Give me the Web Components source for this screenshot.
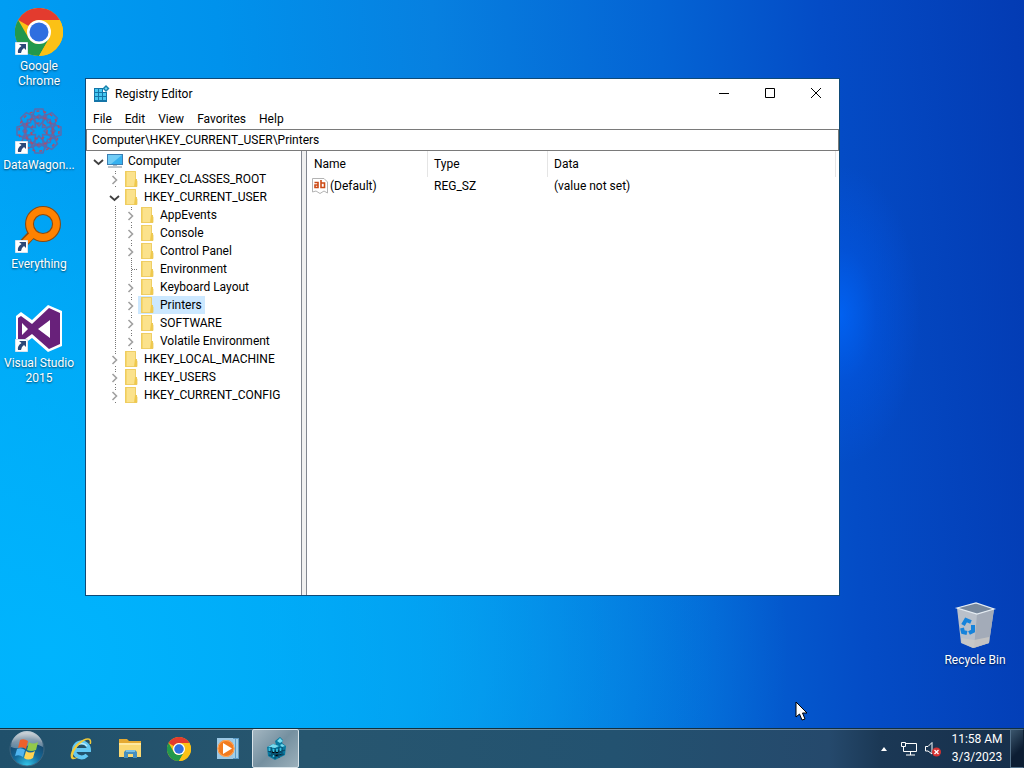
<!DOCTYPE html>
<html lang="en">
<head>
<meta charset="utf-8">
<title>Registry Editor</title>
<style>
  html, body { height: 100%; margin: 0; }
  body { font: 12px/16px Roboto, "Open Sans", sans-serif; color: #000; overflow: hidden; }
</style>
</head>
<body>
<desk-top>
  <desktop-icon slot="icons" icon="chrome" shortcut>Google Chrome</desktop-icon>
  <desktop-icon slot="icons" icon="wagon" shortcut>DataWagon...</desktop-icon>
  <desktop-icon slot="icons" icon="everything" shortcut>Everything</desktop-icon>
  <desktop-icon slot="icons" icon="vs" shortcut>Visual Studio 2015</desktop-icon>
  <desktop-icon slot="corner" icon="bin">Recycle Bin</desktop-icon>

  <app-window slot="window" heading="Registry Editor" icon="regedit">
    <menu-bar slot="menu" items="File,Edit,View,Favorites,Help"></menu-bar>
    <address-bar slot="menu" path="Computer\HKEY_CURRENT_USER\Printers"></address-bar>
    <key-tree slot="tree">
      <tree-row level="0" state="open" icon="computer">Computer</tree-row>
      <tree-row level="1" state="closed">HKEY_CLASSES_ROOT</tree-row>
      <tree-row level="1" state="open">HKEY_CURRENT_USER</tree-row>
      <tree-row level="2" state="closed">AppEvents</tree-row>
      <tree-row level="2" state="closed">Console</tree-row>
      <tree-row level="2" state="closed">Control Panel</tree-row>
      <tree-row level="2" state="leaf">Environment</tree-row>
      <tree-row level="2" state="closed">Keyboard Layout</tree-row>
      <tree-row level="2" state="closed" selected>Printers</tree-row>
      <tree-row level="2" state="closed">SOFTWARE</tree-row>
      <tree-row level="2" state="closed">Volatile Environment</tree-row>
      <tree-row level="1" state="closed">HKEY_LOCAL_MACHINE</tree-row>
      <tree-row level="1" state="closed">HKEY_USERS</tree-row>
      <tree-row level="1" state="closed">HKEY_CURRENT_CONFIG</tree-row>
    </key-tree>
    <value-list slot="list"></value-list>
  </app-window>

  <task-bar slot="taskbar">
    <task-button slot="start" icon="start" size="38" label="Start" wide></task-button>
    <task-button icon="ie" label="Internet Explorer"></task-button>
    <task-button icon="explorer" label="File Explorer"></task-button>
    <task-button icon="chrome" label="Google Chrome"></task-button>
    <task-button icon="player" label="Media Player"></task-button>
    <task-button icon="regcube" label="Registry Editor" active></task-button>
  </task-bar>
</desk-top>

<script>
const ICONS = {
  chrome: ['0 0 48 48', `<circle cx="24" cy="24" r="24" fill="#fbc116"/>
    <path d="M3.2 12A24 24 0 0 1 44.8 12H24A12 12 0 0 0 13.6 18Z" fill="#e33b2e"/>
    <path d="M3.2 12 13.6 30A12 12 0 0 0 24 36L34.4 30 24 48A24 24 0 0 1 3.2 12Z" fill="#22984c"/>
    <path d="M34.4 30 24 48A24 24 0 0 0 44.8 12H24Z" fill="#fbc116"/>
    <circle cx="24" cy="24" r="12" fill="#fff"/><circle cx="24" cy="24" r="9.5" fill="#2f6fe0"/>`],
  wagon: ['0 0 48 48', `<g fill="none" stroke="#5a6cae" stroke-width="1.500">
    ${[0,45,90,135,180,225,270,315].map(r => `<g transform="rotate(${r} 24 24)"><path d="M24 19 17 11 20 2 28 2 31 11Z"/><path d="M17 7 24 12 31 7M15 14 24 8 33 14"/></g>`).join('')}
    </g><g fill="none" stroke="#b04c68" stroke-width="1.500" stroke-dasharray="3 4">
    <circle cx="24" cy="24" r="20"/><circle cx="24" cy="24" r="14"/><circle cx="24" cy="24" r="8"/></g>`],
  everything: ['0 0 48 48', `<path d="M6 40 19 26" stroke="#8a4a10" stroke-width="9"/>
    <circle cx="28" cy="18" r="13.5" fill="none" stroke="#8a4a10" stroke-width="9"/>
    <path d="M6 40 20 26" stroke="#ff8200" stroke-width="6.5"/>
    <circle cx="28" cy="18" r="13.5" fill="none" stroke="#ff8200" stroke-width="6.8"/>`],
  vs: ['0 0 48 48', `<path d="M33 0 47 6V41L33 47 17 33 6 41 1 37V11L6 7 17 15Z" fill="#fff"/>
    <path d="M34 3 45 8V39L34 44 17 29 6 37 3 35V13L6 11 17 19ZM35 15 23 24 35 33ZM7 18V30L13 24Z" fill="#68217a" fill-rule="evenodd"/>`],
  bin: ['0 0 48 48', `<path d="M6 6 25 1 43 7 38 41 22 46 10 41Z" fill="#b9c0ca"/>
    <path d="M6 6 25 1 43 7 26 12Z" fill="#78889c"/><path d="M26 12 43 7 38 41 23 46Z" fill="#a3abb8"/>
    <path d="M10 36 23 38 38 35V41L22 46 11 41Z" fill="#cbc9c5" opacity=".8"/>
    <path d="M6 6 25 1 43 7 26 12Z" fill="none" stroke="#e4ebf2" stroke-width="1.2"/>
    <g fill="none" stroke="#1683db" stroke-width="4"><path d="M12 23 15 18 20 20"/><path d="M22 23 22 29 18 31"/><path d="M11 26 12 30 16 31"/></g>`],
  computer: ['0 0 16 16', `<path d="M0 1H16V12H0Z" fill="#3a7fb4"/><path d="M1 2H15V11H1Z" fill="#36b1ef"/><path d="M1 2H15L4 11H1Z" fill="#72cdf6"/>
    <path d="M1 14H15" stroke="#7d8d99"/><path d="M6 12H10V13H6Z" fill="#a9bac5"/>`],
  folder: ['0 0 16 16', `<path d="M2 0H13V16H2Z" fill="#fbe28c"/><path d="M2 0H4V16H2Z" fill="#f6d76c"/><path d="M12 8H14V16H11Z" fill="#efc94c"/><path d="M2.5 .5H12.500V8L14 10V15.500H2.500Z" fill="none" stroke="#ecc95c" stroke-width=".8"/>`],
  value: ['0 0 16 16', `<path d="M.5 .5H12L15.500 4V15L12 13 8 15.500 4 13 .5 14Z" fill="#fff" stroke="#b3b3b3"/>
    <g fill="none" stroke="#cc4a16" stroke-width="1.600"><path d="M2.500 4.500H6V9.500H3V7H6M9 2V9.500H12.500V5H9"/></g>`],
  regedit: ['0 0 18 18', `<path d="M1 3H10V7H14V17H1Z" fill="#1475a8"/>
    <g fill="#45c7f0">${[[2,4],[6,4],[2,8],[6,8],[10,8],[2,12],[6,12],[10,12]].map(p=>`<path d="M${p[0]} ${p[1]}h3v3h-3z"/>`).join('')}</g>
    <path d="M13 0 16.500 3.500 13 7 9.500 3.500Z" fill="#1681ad"/><path d="M13 2 14.500 3.500 13 5 11.500 3.500Z" fill="#73dcf6"/>`],
  regcube: ['0 0 24 24', `<path d="M3 10 9 7 12 8 11 4 16 0 19 3 18 6 22 9 21 18 11 23 4 19Z" fill="#08799f"/>
    <path d="M4 10 9 7 15 9 11 11ZM13 4 16 1 19 4 16 6ZM16 8 18 7 21 9 18 10Z" fill="#77dcf0"/>
    <g stroke="#0b4e6e" stroke-width="1.200"><path d="M7 10 8 20M11 11V22M15 10V21M18 10V19M4 14 11 17 21 13M5 18 11 20 20 17"/></g>
    <path d="M5.500 11V14M9.500 12V15M9.500 18V20M13 12V15M16.500 11V14" stroke="#36bfe0" stroke-width="1.700"/>`],
  ie: ['0 0 24 24', `<path d="M5.500 13H20A7.500 7.500 0 1 0 18 18" fill="none" stroke="#63c8f3" stroke-width="4"/>
    <path d="M6 11.500A7 7 0 0 1 18 9" fill="none" stroke="#b7ecff" stroke-width="1.500"/>
    <path d="M22 7C24-1 16 0 9 6C2 12 0 20 3 22C5 23 8 21 9 20C4 22 3 20 5 15C8 8 17 1 20 3C21 4 21 5 20.500 7Z" fill="#f2cb39"/>`],
  explorer: ['0 0 24 24', `<path d="M1 2H9L11 4H23V20H1Z" fill="#e5aa32"/><path d="M1 6H23V20H1Z" fill="#fbd972"/><path d="M1 6H23V8H1Z" fill="#ffe9a0"/>
    <path d="M6 21V15L8 13H17L19 15V21H15V17H10V21Z" fill="#478fbe"/><path d="M8 13H17V15H8Z" fill="#79c0e5"/>`],
  player: ['0 0 24 24', `<path d="M4 1H23V22H4Z" fill="#5b9cc8"/><path d="M18 2V21M21 2V21" stroke="#b9dff2" stroke-width="1.500"/><path d="M1 1H17V22H1Z" fill="#9cc8e4"/>
    <circle cx="10" cy="11.500" r="8.500" fill="#f27b1e"/><circle cx="10" cy="11.500" r="8" fill="none" stroke="#ffac61"/><path d="M7 6 16 11.500 7 17Z" fill="#fff"/>`],
  start: ['0 0 38 38', `<defs><radialGradient id="o" cx=".5" cy="1" r="1"><stop offset="0" stop-color="#35cbed"/><stop offset=".4" stop-color="#146b9c"/><stop offset=".8" stop-color="#164265"/><stop offset="1" stop-color="#75828e"/></radialGradient>
    <linearGradient id="g" x2="0" y2="1"><stop offset="0" stop-color="#fff" stop-opacity=".7"/><stop offset="1" stop-color="#fff" stop-opacity=".3"/></linearGradient></defs>
    <circle cx="19" cy="19" r="17" fill="url(#o)" stroke="#3f6680"/><path d="M3 17A16 16 0 0 1 35 17Q27 12 19 16 10 20 3 17Z" fill="url(#g)"/>
    <path d="M12 10Q16 8 20 11L18 19Q14 16 10 18Z" fill="#ee602b"/><path d="M21 12Q25 15 30 12L28 20Q23 22 19 20Z" fill="#92c94a"/>
    <path d="M9 19Q13 17 17 20L15 27Q11 24 7 26Z" fill="#50b4ef"/><path d="M18 21Q22 24 27 21L25 28Q20 31 16 28Z" fill="#ffd452"/>`],
  network: ['0 0 18 16', `<g fill="none" stroke="#fff"><path d="M6 2.500H16.500V10.500H3.500V7M10.500 11V14M6 14H15"/><path d="M1.500 1.500H5.500V5.500H1.500ZM3.500 5.500V9"/></g>`],
  volume: ['0 0 18 16', `<path d="M1.500 5.500H4L8 1.500V13L4 10H1.500Z" fill="none" stroke="#fff"/><circle cx="12.500" cy="11" r="4.500" fill="#d63232"/><path d="M10.500 9 14.500 13M14.500 9 10.500 13" stroke="#fff" stroke-width="1.300"/>`],
  up: ['0 0 8 6', `<path d="M1 5 4 1 7 5Z" fill="#fff"/>`],
  min: ['0 0 12 12', `<path d="M1 5.500H11" stroke="#000"/>`],
  max: ['0 0 12 12', `<path d="M1.500 .5H10.500V9.500H1.500Z" fill="none" stroke="#000"/>`],
  close: ['0 0 12 12', `<path d="M1 0 11 10M11 0 1 10" stroke="#000"/>`],
  shortcut: ['0 0 13 13', `<path d="M.5 .5H12.500V12.500H.5Z" fill="#fff" stroke="#d8e4ef"/><path d="M4 2H11V8L9 6Q6 8 6 11H3Q2 7 6.500 4Z" fill="#2c4878"/>`],
  pointer: ['0 0 14 20', `<path d="M1 1V16L4.500 13 7 19 10 18 7.500 12H12Z" fill="#fff" stroke="#000"/>`]
};

function define(name, render) {
  customElements.define(name, class extends HTMLElement {
    connectedCallback() {
      if (this.shadowRoot) return;
      const tpl = document.createElement('template');
      tpl.innerHTML = render(this);
      this.attachShadow({ mode: 'open' }).append(tpl.content.cloneNode(true));
    }
  });
}
const attr = (el, name, fallback = '') => el.getAttribute(name) ?? fallback;

define('sys-icon', el => `
  <style>:host{display:block;flex:none;line-height:0} svg{display:block}</style>
  <svg width="${attr(el,'w',16)}" height="${attr(el,'h',attr(el,'w',16))}" viewBox="${ICONS[attr(el,'name')][0]}" aria-hidden="true">${ICONS[attr(el,'name')][1]}</svg>`);

define('desk-top', () => `
  <style>
    :host{display:flex;flex-direction:column;height:100vh;
      background:
        radial-gradient(ellipse 80px 150px at 840px 315px,rgba(0,104,255,.75),rgba(0,96,250,.3) 45%,transparent),
        radial-gradient(ellipse 72% 75% at 5% 85%,rgba(0,184,255,.85),rgba(0,182,252,.6) 50%,transparent),
        linear-gradient(86deg,#00a0f5 0%,#0092ec 25%,#0780e0 45%,#0464d4 66%,#044cc6 81%,#033bb3 100%)}
    main{flex:1;position:relative;display:flex;justify-content:space-between;min-height:0}
    .icons{display:flex;flex-direction:column}
    .corner{align-self:flex-end;padding:0 10px 35px 0}
    .canvas{position:absolute;inset:78px 184px 132px 85px}
    .pointer{position:absolute;left:795px;top:701px}
  </style>
  <main>
    <div class="icons"><slot name="icons"></slot></div>
    <div class="corner"><slot name="corner"></slot></div>
    <div class="canvas"><slot name="window"></slot></div>
  </main>
  <slot name="taskbar"></slot>
  <sys-icon class="pointer" name="pointer" w="14" h="20"></sys-icon>`);

define('desktop-icon', el => `
  <style>
    :host{display:block;width:78px;height:99px}
    button{all:unset;box-sizing:border-box;width:100%;display:flex;flex-direction:column;align-items:center;gap:3px;padding-top:8px;
      color:#fff;text-align:center;line-height:15px;text-shadow:0 1px 2px rgba(0,0,0,.6)}
    .art{position:relative}
    .arrow{position:absolute;left:0;bottom:1px}
  </style>
  <button type="button">
    <span class="art"><sys-icon name="${attr(el,'icon')}" w="48"></sys-icon>
    ${el.hasAttribute('shortcut') ? '<sys-icon class="arrow" name="shortcut" w="13"></sys-icon>' : ''}</span>
    <span><slot></slot></span>
  </button>`);

define('app-window', el => `
  <style>
    :host{display:flex;flex-direction:column;height:100%;box-sizing:border-box;border:1px solid #0f4a78;background:#fff}
    header{display:flex;align-items:center;height:30px;padding-left:7px}
    h1{font:inherit;margin:0;padding-left:4px;flex:1}
    header button{all:unset;display:grid;place-items:center;width:46px;height:28px}
    .panes{flex:1;display:grid;grid-template-columns:215px 6px minmax(0,1fr);min-height:0}
    .split{background:#f0f0f0;border:solid #828790;border-width:0 1px}
  </style>
  <header>
    <sys-icon name="${attr(el,'icon')}" w="18"></sys-icon>
    <h1>${attr(el,'heading')}</h1>
    <button type="button" aria-label="Minimize"><sys-icon name="min" w="12"></sys-icon></button>
    <button type="button" aria-label="Maximize"><sys-icon name="max" w="12"></sys-icon></button>
    <button type="button" aria-label="Close"><sys-icon name="close" w="12"></sys-icon></button>
  </header>
  <slot name="menu"></slot>
  <div class="panes"><slot name="tree"></slot><div class="split"></div><slot name="list"></slot></div>`);

define('menu-bar', el => `
  <style>
    :host{display:flex;height:20px}
    button{all:unset;padding:0 6px 0 7px}
  </style>
  ${attr(el,'items').split(',').map(t => `<button type="button">${t}</button>`).join('')}`);

define('address-bar', el => `
  <style>
    :host{display:block}
    input{display:block;box-sizing:border-box;width:100%;height:22px;margin:0;padding:0 5px;border:1px solid #7a7a7a;font:inherit;color:#000;background:#fff;outline:0;border-radius:0}
  </style>
  <input type="text" aria-label="Address" value="${attr(el,'path')}">`);

define('key-tree', () => `
  <style>:host{display:block;padding:1px 0 0 4px;overflow:hidden}</style>
  <div role="tree" aria-label="Registry keys"><slot></slot></div>`);

define('tree-row', el => {
  const level = +attr(el, 'level'), state = attr(el, 'state');
  const dots = d => `<path d="${d}" stroke="#777" stroke-dasharray="1 1" fill="none"/>`;
  const cell = body => `<svg width="16" height="18" viewBox="0 0 16 18" aria-hidden="true">${body}</svg>`;
  const marks = {
    open: '<path d="M4 8 8.500 12 13 8" fill="none" stroke="#404040" stroke-width="1.800"/>',
    closed: dots('M9.500 1V4M9.500 16V18') + '<path d="M6.500 6 10.500 10 6.500 14" fill="none" stroke="#a0a0a0" stroke-width="1.600"/>',
    leaf: dots('M9.500 0V18M10 9.500H16')
  };
  return `
  <style>
    :host{display:flex;height:18px;line-height:18px;white-space:nowrap}
    svg{display:block;flex:none}
    .pad{width:16px}
    .body{display:flex;align-items:center;gap:5px;padding:0 3px 0 1px}
    :host([selected]) .body{background:#cce8ff}
  </style>
  ${level > 0 ? '<span class="pad"></span>' : ''}
  ${level > 1 ? cell(dots('M9.500 0V18')) : ''}
  ${cell(marks[state])}
  <span class="body" role="treeitem"><sys-icon name="${attr(el,'icon','folder')}" w="16"></sys-icon><span><slot></slot></span></span>`;
});

define('value-list', () => `
  <style>
    :host{display:block;padding:0 3px 0 1px}
    table{width:100%;table-layout:fixed;border-collapse:separate;border-spacing:0}
    th,td{font-weight:400;text-align:left;padding:0 0 0 6px;white-space:nowrap}
    th{height:26px;box-sizing:border-box;border-right:1px solid #e5e5e5}
    .c{width:120px;box-sizing:border-box}
    td{height:18px}
    td.name{padding-left:4px}
    .name span{display:flex;align-items:center;gap:2px}
  </style>
  <table>
    <thead><tr><th class="c">Name</th><th class="c">Type</th><th>Data</th></tr></thead>
    <tbody><tr><td class="name"><span><sys-icon name="value" w="16"></sys-icon>(Default)</span></td><td>REG_SZ</td><td>(value not set)</td></tr></tbody>
  </table>`);

define('task-button', el => `
  <style>
    :host{display:block;width:49px;height:100%}
    :host([wide]){width:54px}
    button{all:unset;box-sizing:border-box;display:grid;place-items:center;width:100%;height:100%}
    :host([active]){width:47px}
    :host([active]) button{border:1px solid #d8e4ea;border-radius:2px;background:linear-gradient(135deg,#a3b6c1,#7590a0 50%,#9bb0bb)}
  </style>
  <button type="button" aria-label="${attr(el,'label')}"><sys-icon name="${attr(el,'icon')}" w="${attr(el,'size',24)}"></sys-icon></button>`);

define('task-bar', () => `
  <style>
    :host{display:flex;align-items:stretch;box-sizing:border-box;height:40px;border-top:1px solid #12303f;
      background:linear-gradient(rgba(255,255,255,.35) 1px,transparent 1px),linear-gradient(90deg,#20506b,#27566f 30%,#235270 60%,#25496c 81%,#1b3855 86%,#172f4b)}
    .apps{display:flex;flex:1;padding-left:2px}
    .tray{display:flex;align-items:center;gap:6px;color:#fff}
    .tray button{all:unset;display:block}
    .hidden{padding-right:6px}
    .clock{line-height:18px;text-align:center;width:58px;padding:0 4px 2px 0}
    .tray .show{display:block;box-sizing:border-box;width:14px;height:100%;border:1px solid #54718a;border-right-color:#0d1f33;background:linear-gradient(135deg,#3b566d,#0c1d33 60%)}
    .end{display:flex;height:100%;align-items:center}
  </style>
  <slot name="start"></slot>
  <div class="apps"><slot></slot></div>
  <div class="tray">
    <div class="hidden"><button type="button" aria-label="Show hidden icons"><sys-icon name="up" w="8" h="6"></sys-icon></button></div>
    <sys-icon name="network" w="18" h="16"></sys-icon>
    <sys-icon name="volume" w="18" h="16"></sys-icon>
    <div class="end">
      <div class="clock"><div>11:58 AM</div><div>3/3/2023</div></div>
      <button type="button" class="show" aria-label="Show desktop"></button>
    </div>
  </div>`);
</script>
</body>
</html>
